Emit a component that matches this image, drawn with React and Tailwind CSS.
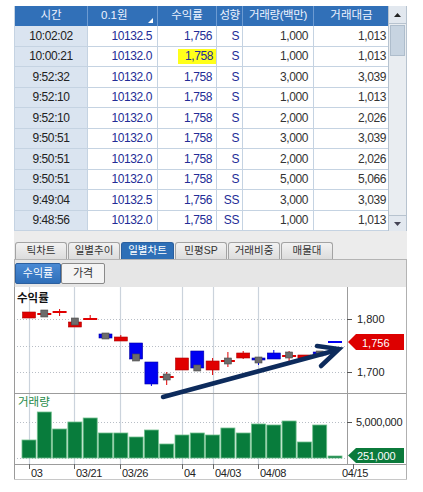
import React from 'react'

const rows = [
  ['10:02:02', '10132.5', '1,756', 'S', '1,000', '1,013'],
  ['10:00:21', '10132.0', '1,758', 'S', '1,000', '1,013'],
  ['9:52:32', '10132.0', '1,758', 'S', '3,000', '3,039'],
  ['9:52:10', '10132.0', '1,758', 'S', '1,000', '1,013'],
  ['9:52:10', '10132.0', '1,758', 'S', '2,000', '2,026'],
  ['9:50:51', '10132.0', '1,758', 'S', '3,000', '3,039'],
  ['9:50:51', '10132.0', '1,758', 'S', '2,000', '2,026'],
  ['9:50:51', '10132.0', '1,758', 'S', '5,000', '5,066'],
  ['9:49:04', '10132.5', '1,756', 'SS', '3,000', '3,039'],
  ['9:48:56', '10132.0', '1,758', 'SS', '1,000', '1,013'],
]

const tabs = ['틱차트', '일별추이', '일별차트', '민평SP', '거래비중', '매물대']

const R = '#e00000'
const B = '#0000f2'

// svg coords: x - 14, y - 287
const candles = [
  { body: [R, 25, 31] },
  { h: [R, 27], g: [23, 30] },
  { h: [R, 25], w: [R, 22, 29] },
  { body: [R, 35, 40], g: [31, 38] },
  { h: [R, 32], w: [R, 28, 32] },
  { body: [B, 47, 51], g: [46, 52] },
  { body: [R, 50, 54], w: [R, 48, 50] },
  { body: [B, 56, 72], g: [67, 74] },
  { body: [B, 75, 97], w: [B, 97, 99] },
  { h: [R, 90], w: [R, 85, 98], g: [87, 93] },
  { body: [R, 71, 83] },
  { body: [B, 64, 81], g: [78, 84] },
  { body: [R, 74, 83], w: [R, 71, 88] },
  { h: [R, 74], w: [R, 65, 80], g: [71, 77] },
  { body: [R, 66, 71], w: [R, 64, 72] },
  { body: [B, 71, 73], w: [B, 70, 78], g: [70, 76] },
  { body: [B, 66, 72], w: [B, 63, 66] },
  { h: [R, 69], w: [R, 64, 74], g: [65, 71] },
  { body: [R, 68, 71] },
  { body: [B, 65, 68], g: [64, 69] },
  { h: [B, 55] },
]

const vols = [153, 125, 142, 135, 131, 146, 146, 150, 143, 157, 148, 146, 148, 141, 146, 137, 138, 134, 155, 138, 169]

const xLabels = [
  [15, '03'],
  [60, '03/21'],
  [106, '03/26'],
  [168, '04'],
  [199, '04/03'],
  [244, '04/08'],
]

const cx = (i) => 15 + 15.3 * i

function Chart() {
  const font = { fontFamily: '"Liberation Sans", "Noto Sans CJK KR", sans-serif' }
  return (
    <svg width="393" height="193" viewBox="0 0 393 193" style={font}>
      <rect x="0" y="0" width="393" height="193" fill="#ffffff" />
      {/* vertical grid */}
      {xLabels.map(([x]) => (
        <line key={x} x1={x + 0.5} y1="0" x2={x + 0.5} y2="177" stroke="#cbd3dc" strokeWidth="1.2" />
      ))}
      {/* dotted grid */}
      {[32, 59, 85, 135, 171].map((y) => (
        <line key={y} x1="0" y1={y + 0.5} x2="333" y2={y + 0.5} stroke="#b8bec6" strokeWidth="1" strokeDasharray="1 2" />
      ))}
      {/* frame lines */}
      <line x1="0" y1="106.5" x2="393" y2="106.5" stroke="#9c9c9c" />
      <line x1="0" y1="177.5" x2="393" y2="177.5" stroke="#9c9c9c" />
      <line x1="333.5" y1="0" x2="333.5" y2="177" stroke="#9c9c9c" />
      <line x1="0.5" y1="0" x2="0.5" y2="193" stroke="#9a9a9a" />
      <line x1="392.5" y1="0" x2="392.5" y2="193" stroke="#b0b0b0" />
      <line x1="0" y1="192.5" x2="393" y2="192.5" stroke="#c8c8c8" />

      {/* right axis ticks and labels */}
      {[32, 85, 135].map((y) => (
        <line key={y} x1="333" y1={y + 0.5} x2="338" y2={y + 0.5} stroke="#555" />
      ))}
      <text x="343" y="36" fontSize="11" fill="#222">1,800</text>
      <text x="343" y="89" fontSize="11" fill="#222">1,700</text>
      <text x="342" y="139" fontSize="11" fill="#222" letterSpacing="-0.3">5,000,000</text>

      {/* labels */}
      <text x="3" y="15" fontSize="11.5" fontWeight="bold" fill="#111">수익률</text>
      <text x="4" y="119" fontSize="11.5" fill="#1e8a48">거래량</text>

      {/* volume bars */}
      {vols.map((t, i) => (
        <rect key={i} x={8 + 15.3 * i} y={t} width="14" height={171 - t} fill="#087c3c" stroke="#6fbf8c" strokeWidth="0.8" />
      ))}

      {/* candles */}
      {candles.map((c, i) => {
        const x = cx(i)
        return (
          <g key={i}>
            {c.w && <line x1={x} y1={c.w[1]} x2={x} y2={c.w[2]} stroke={c.w[0]} strokeWidth="1" />}
            {c.h && <line x1={x - 7} y1={c.h[1]} x2={x + 7} y2={c.h[1]} stroke={c.h[0]} strokeWidth="2" />}
            {c.body && (
              <rect x={x - 6.5} y={c.body[1]} width="13" height={c.body[2] - c.body[1]} fill={c.body[0]} stroke={c.body[0] === B ? '#0000a0' : '#b00000'} strokeWidth="0.6" />
            )}
            {c.g && <rect x={x - 3.5} y={c.g[0]} width="7" height={c.g[1] - c.g[0]} fill="#6c6c6c" stroke="#4a4a4a" strokeWidth="0.6" />}
          </g>
        )
      })}

      {/* trend arrow */}
      <line x1="149" y1="110" x2="323" y2="63" stroke="#0d2b5c" strokeWidth="4.5" strokeLinecap="round" />
      <polyline points="303,59 325,62 307,79" fill="none" stroke="#0d2b5c" strokeWidth="4.5" strokeLinecap="round" strokeLinejoin="miter" />

      {/* price tag */}
      <polygon points="334,55 342,47 390,47 390,63 342,63" fill="#dd0000" />
      <text x="348" y="59.5" fontSize="11" fill="#ffffff">1,756</text>
      {/* volume tag */}
      <polygon points="334,168.5 342,161 390,161 390,176 342,176" fill="#0b7a3b" />
      <text x="343" y="172.5" fontSize="11" fill="#ffffff" letterSpacing="-0.2">251,000</text>

      {/* x axis ticks and labels */}
      {xLabels.map(([x, l]) => (
        <g key={l}>
          <line x1={x + 0.5} y1="177" x2={x + 0.5} y2="182" stroke="#666" />
          <text x={x + 2} y="190" fontSize="11" fill="#222" letterSpacing="-0.3">{l}</text>
        </g>
      ))}
      <line x1="339.5" y1="177" x2="339.5" y2="182" stroke="#666" />
      <text x="328" y="190" fontSize="11" fill="#222" letterSpacing="-0.3">04/15</text>
    </svg>
  )
}

export default function App() {
  return (
    <div className="w-[423px] h-[492px] bg-white pl-[14px] pt-[6px] font-['Liberation_Sans','Noto_Sans_CJK_KR',sans-serif]">
      <div className="w-[393px]">
        {/* table + scrollbar */}
        <div className="flex">
          <div className="w-[374px] border-l border-[#c5d3e2]">
            <div className="grid grid-cols-[73px_70px_59px_26px_71px_75px] h-[20px] bg-[#3170b8] text-[#eef3ff] text-[11.5px]">
              <div className="flex items-center justify-center border-r border-[#6d9bd2]">시간</div>
              <div className="relative flex items-center pl-[13px] border-r border-[#6d9bd2]">
                0.1원
                <svg className="absolute right-[4px] bottom-[3px]" width="5" height="5" viewBox="0 0 5 5">
                  <polygon points="5,0 5,5 0,5" fill="#ffffff" />
                </svg>
              </div>
              <div className="flex items-center justify-center border-r border-[#6d9bd2]">수익률</div>
              <div className="flex items-center justify-center border-r border-[#6d9bd2] tracking-[-0.5px]">성향</div>
              <div className="flex items-center justify-center border-r border-[#6d9bd2] tracking-[-0.4px]">거래량(백만)</div>
              <div className="flex items-center justify-center">거래대금</div>
            </div>
            {rows.map((r, i) => (
              <div key={i} className="grid grid-cols-[73px_70px_59px_26px_71px_75px] h-[20.5px] text-[12px] tracking-[-0.4px] border-b border-[#c5d3e2]">
                <div className="flex items-center justify-center bg-[#dae4f0] border-r border-[#c5d3e2] text-[#222]">{r[0]}</div>
                <div className="flex items-center justify-end pr-[5px] border-r border-[#c5d3e2] text-[#232c96]">{r[1]}</div>
                <div className="flex items-center justify-end pr-[4px] border-r border-[#c5d3e2] text-[#232c96]">
                  <span className={i === 1 ? 'bg-[#ffff1a] pl-[7px] pr-[3px] -mr-[4px] leading-[15px]' : ''}>{r[2]}</span>
                </div>
                <div className="flex items-center justify-end pr-[3px] border-r border-[#c5d3e2] text-[#232c96]">{r[3]}</div>
                <div className="flex items-center justify-end pr-[5px] border-r border-[#c5d3e2] text-[#333]">{r[4]}</div>
                <div className="flex items-center justify-end pr-[3px] text-[#333]">{r[5]}</div>
              </div>
            ))}
          </div>
          <div className="w-[19px] flex flex-col bg-[#e9edf1] border-l border-r border-[#b7c3cf]">
            <div className="h-[18px] flex items-center justify-center bg-[#e2e8ef] border-b border-[#b7c3cf]">
              <svg width="7" height="4" viewBox="0 0 7 4"><polygon points="0,4 3.5,0 7,4" fill="#222" /></svg>
            </div>
            <div className="h-[31px] mx-[1px] mt-[1px] bg-[#c7d4e1] border border-[#aebdcc]" />
            <div className="flex-1" />
            <div className="h-[16px] flex items-center justify-center bg-[#e2e8ef] border-t border-[#b7c3cf]">
              <svg width="7" height="4" viewBox="0 0 7 4"><polygon points="0,0 7,0 3.5,4" fill="#445" /></svg>
            </div>
          </div>
        </div>

        <div className="h-[11px] bg-[#ececec]" />

        {/* tabs */}
        <div className="h-[17px] bg-[#ececec] flex items-end gap-[1px] pl-[1px]">
          {tabs.map((t, i) => (
            <div
              key={t}
              className={
                i === 2
                  ? 'w-[53px] h-[17px] flex items-center justify-center rounded-t-[3px] border border-b-0 border-[#2a5f9e] bg-[#2e6fb7] text-white text-[10.5px]'
                  : 'w-[52px] h-[17px] flex items-center justify-center rounded-t-[3px] border border-b-0 border-[#a3a3a3] bg-gradient-to-b from-[#f2f2f2] to-[#dcdcdc] text-[#333] text-[10.5px]'
              }
            >
              {t}
            </div>
          ))}
        </div>

        {/* sub buttons */}
        <div className="h-[28px] bg-[#e6e6e6] border-t border-x border-[#b4b4b4] flex items-center">
          <div className="w-[46px] h-[21px] flex items-center justify-center rounded-[2px] border border-[#2c5f9e] bg-gradient-to-b from-[#4a8ad4] to-[#2f6fb9] text-white text-[11px]">수익률</div>
          <div className="w-[44px] h-[21px] flex items-center justify-center rounded-[2px] border border-[#8a8a8a] bg-[#f4f4f4] text-[#333] text-[11px]">가격</div>
        </div>

        <Chart />
      </div>
    </div>
  )
}
